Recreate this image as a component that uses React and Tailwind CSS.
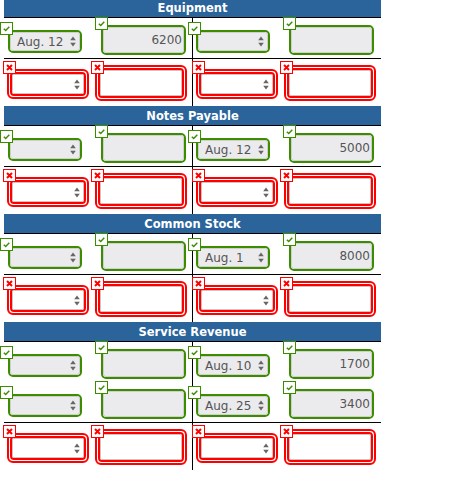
import React from "react";

const accounts = [
  {
    title: "Equipment",
    entries: [{ left: { date: "Aug. 12", amount: "6200" }, right: {} }],
  },
  {
    title: "Notes Payable",
    entries: [{ left: {}, right: { date: "Aug. 12", amount: "5000" } }],
  },
  {
    title: "Common Stock",
    entries: [{ left: {}, right: { date: "Aug. 1", amount: "8000" } }],
  },
  {
    title: "Service Revenue",
    entries: [
      { left: {}, right: { date: "Aug. 10", amount: "1700" } },
      { left: {}, right: { date: "Aug. 25", amount: "3400" } },
    ],
  },
];

function Mark({ ok, className }) {
  return (
    <span
      className={`absolute z-10 flex h-[13px] w-[13px] items-center justify-center border bg-white ${
        ok ? "border-[#3c8c00]" : "border-[#f00]"
      } ${className}`}
    >
      <svg width="9" height="9" viewBox="0 0 9 9">
        {ok ? (
          <path d="M1.8 4.8 L3.7 6.5 L7.3 2.8" fill="none" stroke="#3c8c00" strokeWidth="1.4" />
        ) : (
          <path d="M2 2 L7 7 M7 2 L2 7" stroke="#f00" strokeWidth="2" />
        )}
      </svg>
    </span>
  );
}

function Arrows() {
  return (
    <svg width="6" height="11" viewBox="0 0 6 11" className="shrink-0">
      <path d="M3 0.5 L5.8 4.2 L0.2 4.2 Z M0.2 6.8 L5.8 6.8 L3 10.5 Z" fill="#666" />
    </svg>
  );
}

// answered cells: green frame, grey read-only field
function GreenDate({ value }) {
  return (
    <div className="relative mt-[12px] h-[23px] w-[74px] rounded-[5px] border-2 border-[#3c8c00]">
      <Mark ok className="-left-[10px] -top-[10px]" />
      <div className="flex h-full items-center justify-between rounded-[3px] border border-[#cfcfcf] bg-[#ebebed] pl-[6px] pr-[3px] leading-none text-[#555]">
        <span>{value}</span>
        <Arrows />
      </div>
    </div>
  );
}

function GreenAmount({ value }) {
  return (
    <div className="relative mt-[7px] h-[30px] w-[85px] rounded-[5px] border-2 border-[#3c8c00]">
      <Mark ok className="-left-[8px] -top-[10px]" />
      <div className="flex h-full items-center justify-end rounded-[3px] border border-[#cfcfcf] bg-[#ebebed] pr-[1px] leading-none text-[#555]">
        {value}
      </div>
    </div>
  );
}

// unanswered cells: double red ring around an empty white field
function RedRing({ className, children }) {
  return (
    <div className={`relative rounded-[6px] border-2 border-[#f00] bg-white p-px ${className}`}>
      <div className="h-full rounded-[4px] border-2 border-[#f00]">{children}</div>
    </div>
  );
}

function RedDate() {
  return (
    <RedRing className="mt-[10px] h-[30px] w-[82px]">
      <Mark className="-left-[6px] -top-[10px]" />
      <div className="flex h-full items-center justify-end rounded-[2px] border border-[#c6c6c6] bg-white pr-[3px]">
        <Arrows />
      </div>
    </RedRing>
  );
}

function RedAmount() {
  return (
    <RedRing className="mt-[6px] h-[36px] w-[92px]">
      <Mark className="-left-[6px] -top-[6px]" />
      <div className="h-full rounded-[2px] border border-[#c6c6c6] bg-white" />
    </RedRing>
  );
}

function EntryRow({ entry, last }) {
  return (
    <div className={`grid h-[40px] grid-cols-[189px_188px] ${last ? "h-[41px] border-b border-black" : ""}`}>
      <div className="flex gap-[19px] border-r border-black pl-[4px]">
        <GreenDate value={entry.left.date} />
        <GreenAmount value={entry.left.amount} />
      </div>
      <div className="flex gap-[19px] pl-[3px]">
        <GreenDate value={entry.right.date} />
        <GreenAmount value={entry.right.amount} />
      </div>
    </div>
  );
}

function BlankRow() {
  return (
    <div className="grid h-[47px] grid-cols-[189px_188px]">
      <div className="flex gap-[6px] border-r border-black pl-[3px]">
        <RedDate />
        <RedAmount />
      </div>
      <div className="flex gap-[6px] pl-[3px]">
        <RedDate />
        <RedAmount />
      </div>
    </div>
  );
}

export default function App() {
  return (
    <div className="h-[481px] w-[460px] overflow-hidden bg-white font-['DejaVu_Sans',Verdana,sans-serif] text-[12px]">
      <div className="-mt-[2px] ml-[4px] w-[377px]">
        {accounts.map((acct) => (
          <section key={acct.title}>
            <h2 className="flex h-[20px] items-center justify-center border-b border-black bg-[#2a649b] pt-[3px] text-[11.5px] font-bold leading-none text-white">
              {acct.title}
            </h2>
            {acct.entries.map((entry, i) => (
              <EntryRow key={i} entry={entry} last={i === acct.entries.length - 1} />
            ))}
            <BlankRow />
          </section>
        ))}
      </div>
    </div>
  );
}
